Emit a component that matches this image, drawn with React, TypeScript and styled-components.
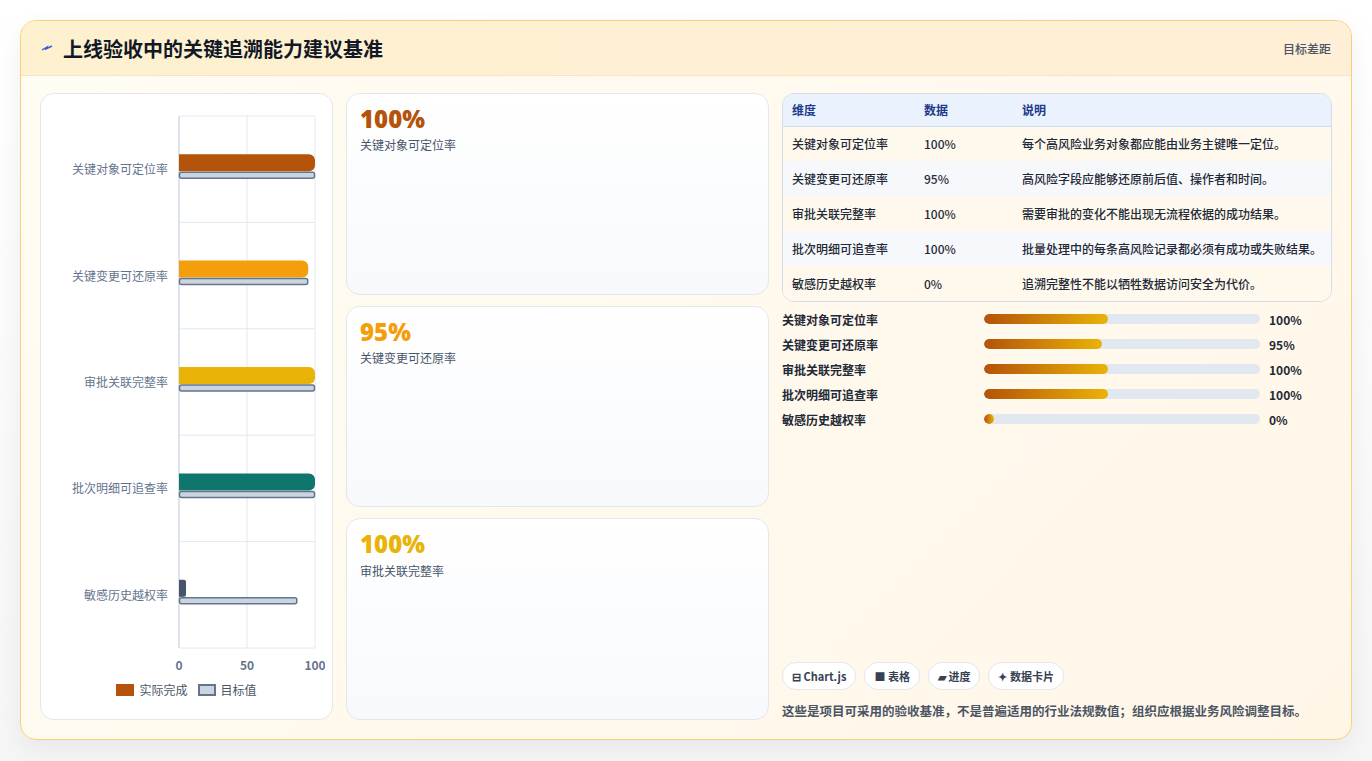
import React from 'react'
import styled, { createGlobalStyle } from 'styled-components'

// ── Data ──────────────────────────────────────────────────────────────────────

const METRICS = [
  { name: '关键对象可定位率', value: 100, target: 100, color: '#b45309', note: '每个高风险业务对象都应能由业务主键唯一定位。' },
  { name: '关键变更可还原率', value: 95, target: 95, color: '#f59e0b', note: '高风险字段应能够还原前后值、操作者和时间。' },
  { name: '审批关联完整率', value: 100, target: 100, color: '#eab308', note: '需要审批的变化不能出现无流程依据的成功结果。' },
  { name: '批次明细可追查率', value: 100, target: 100, color: '#0f766e', note: '批量处理中的每条高风险记录都必须有成功或失败结果。' },
  { name: '敏感历史越权率', value: 0, target: 87, color: '#475569', note: '追溯完整性不能以牺牲数据访问安全为代价。' },
]

const FONT = `"Noto Sans CJK SC", "Noto Sans", sans-serif`

// ── Styled ────────────────────────────────────────────────────────────────────

const Global = createGlobalStyle`
  html, body { margin: 0; background: #f3f4f6; font-family: ${FONT}; }
  * { box-sizing: border-box; }
`

const Page = styled.div`
  padding: 20px 20px 21px 20px;
  width: 1372px;
  height: 761px;
  background: linear-gradient(180deg, #fff 0%, #f5f5f5 100%);
`

const Panel = styled.div`
  height: 720px;
  border: 1px solid #f3d27a;
  border-radius: 16px;
  background: linear-gradient(135deg, #fffcf3 0%, #fff6e8 100%);
  overflow: hidden;
  display: flex;
  flex-direction: column;
  box-shadow: 0 8px 24px rgba(0, 0, 0, 0.06);
`

const Header = styled.div`
  height: 55px;
  flex-shrink: 0;
  display: flex;
  align-items: center;
  justify-content: space-between;
  padding: 0 20px 0 20px;
  background: linear-gradient(90deg, #fdf1cf 0%, #feefd6 100%);
  border-bottom: 1px solid #f4e6c4;
`

const Title = styled.h1`
  margin: 0;
  font-size: 20px;
  font-weight: 700;
  color: #111827;
  display: flex;
  align-items: center;
  gap: 10px;
`

const HeaderMeta = styled.span`
  font-size: 12px;
  color: #4b5563;
  font-weight: 500;
`

const Body = styled.div`
  flex: 1;
  display: grid;
  grid-template-columns: 293px 423px 1fr;
  gap: 13px;
  padding: 17px 19px 19px 19px;
  min-height: 0;
`

const Card = styled.div`
  background: #fff;
  border: 1px solid #e5e7eb;
  border-radius: 14px;
`

const ChartCard = styled(Card)`
  padding: 10px 8px 10px 8px;
  display: flex;
  flex-direction: column;
  align-items: center;
`

const Legend = styled.div`
  display: flex;
  gap: 10px;
  align-items: center;
  font-size: 12px;
  color: #4b5563;
  margin-top: 2px;
`

const LegendItem = styled.span`
  display: flex;
  align-items: center;
  gap: 5px;
`

const Swatch = styled.span<{ $fill: string; $border?: string }>`
  width: 18px;
  height: 12px;
  background: ${(p) => p.$fill};
  border: ${(p) => (p.$border ? `2px solid ${p.$border}` : 'none')};
`

const StatColumn = styled.div`
  display: grid;
  grid-template-rows: repeat(3, 1fr);
  gap: 11px;
`

const StatCard = styled(Card)`
  background: linear-gradient(180deg, #ffffff 0%, #f7f9fc 100%);
  padding: 12px 13px;
`

const StatValue = styled.div<{ $color: string }>`
  font-size: 24px;
  font-weight: 800;
  color: ${(p) => p.$color};
  line-height: 1.1;
  font-family: "Open Sans", ${FONT};
`

const StatLabel = styled.div`
  font-size: 12px;
  color: #475569;
  margin-top: 4px;
`

const RightColumn = styled.div`
  display: flex;
  flex-direction: column;
  min-width: 0;
`

const TableWrap = styled.div`
  border: 1px solid #d5dce6;
  border-radius: 12px;
  overflow: hidden;
`

const Table = styled.table`
  width: 100%;
  border-collapse: collapse;
  font-size: 12px;
`

const Th = styled.th`
  text-align: left;
  font-weight: 700;
  color: #1e3a8a;
  background: #eaf2fd;
  height: 32px;
  padding: 0 9px;
  border-bottom: 1px solid #cfdbea;
`

const Tr = styled.tr<{ $alt: boolean }>`
  background: ${(p) => (p.$alt ? '#f6f8fb' : '#fef9ec')};
  & + & td { border-top: 1px solid #e6eaf0; }
`

const Td = styled.td`
  height: 35px;
  padding: 0 9px;
  color: #1f2937;
  font-weight: 500;
  white-space: nowrap;
`

const Bars = styled.div`
  margin-top: 8px;
  display: flex;
  flex-direction: column;
  gap: 7px;
`

const BarRow = styled.div`
  display: grid;
  grid-template-columns: 202px 276px 1fr;
  align-items: center;
  gap: 0;
  height: 18px;
  font-size: 12px;
  font-weight: 700;
  color: #1f2937;
`

const Track = styled.div`
  height: 10px;
  border-radius: 5px;
  background: #e2e8f0;
  overflow: hidden;
`

const Fill = styled.div`
  height: 100%;
  min-width: 10px;
  border-radius: 5px;
  background: linear-gradient(90deg, #b45309 0%, #eab308 100%);
`

const BarValue = styled.span`
  padding-left: 9px;
`

const Spacer = styled.div`
  flex: 1;
`

const Chips = styled.div`
  display: flex;
  gap: 8px;
`

const Chip = styled.span`
  height: 28px;
  padding: 0 9px;
  display: inline-flex;
  align-items: center;
  gap: 4px;
  border-radius: 14px;
  background: #fff;
  border: 1px solid #e5e7eb;
  font-size: 11px;
  font-weight: 700;
  color: #374151;
`

const Footnote = styled.p`
  margin: 11px 0 0;
  font-size: 12.5px;
  font-weight: 600;
  color: #4b5563;
  white-space: nowrap;
`

// ── Chart ─────────────────────────────────────────────────────────────────────

function BarChart() {
  const x0 = 130
  const w = 136
  const top = 12
  const band = 106.4
  const sx = (v: number) => x0 + (v / 100) * w
  return (
    <svg width="276" height="575" style={{ fontFamily: FONT }}>
      {[0, 50, 100].map((v) => (
        <line key={v} x1={sx(v)} x2={sx(v)} y1={top} y2={top + band * 5} stroke="#e2e8f0" />
      ))}
      {[0, 1, 2, 3, 4, 5].map((i) => (
        <line key={i} x1={x0} x2={x0 + w} y1={top + band * i} y2={top + band * i} stroke="#e2e8f0" />
      ))}
      <line x1={x0} x2={x0} y1={top} y2={top + band * 5} stroke="#cbd5e1" />
      {METRICS.map((m, i) => {
        const cy = top + band * i + band / 2
        return (
          <g key={m.name}>
            <text x={x0 - 11} y={cy + 5} textAnchor="end" fontSize="12" fill="#64748b">{m.name}</text>
            <path
              d={`M${x0} ${cy - 15} H${Math.max(sx(m.value) - 6, x0 + 1)} a6 6 0 0 1 6 6 v5 a6 6 0 0 1 -6 6 H${x0} Z`}
              fill={m.color}
            />
            {m.value === 0 && <rect x={x0} y={cy - 15} width={7} height={17} rx={2} fill={m.color} />}
            <rect x={x0 + 0.5} y={cy + 3} width={sx(m.target) - x0 - 1} height={6} rx={2} fill="#cbd5e1" stroke="#64748b" strokeWidth="1.5" />
          </g>
        )
      })}
      {[0, 50, 100].map((v) => (
        <text key={v} x={sx(v)} y={top + band * 5 + 22} textAnchor="middle" fontSize="12" fontWeight="600" fill="#64748b">{v}</text>
      ))}
    </svg>
  )
}

// ── App ───────────────────────────────────────────────────────────────────────

export default function App() {
  return (
    <Page>
      <Global />
      <Panel>
        <Header>
          <Title>
            <svg width="12" height="10" viewBox="0 0 12 10">
              <path d="M1 7 L6 4 L5 6 L11 3" stroke="#3b5bdb" strokeWidth="1.4" fill="none" />
            </svg>
            上线验收中的关键追溯能力建议基准
          </Title>
          <HeaderMeta>目标差距</HeaderMeta>
        </Header>
        <Body>
          <ChartCard>
            <BarChart />
            <Legend>
              <LegendItem><Swatch $fill="#b45309" />实际完成</LegendItem>
              <LegendItem><Swatch $fill="#cbd5e1" $border="#64748b" />目标值</LegendItem>
            </Legend>
          </ChartCard>

          <StatColumn>
            {METRICS.slice(0, 3).map((m) => (
              <StatCard key={m.name}>
                <StatValue $color={m.color}>{m.value}%</StatValue>
                <StatLabel>{m.name}</StatLabel>
              </StatCard>
            ))}
          </StatColumn>

          <RightColumn>
            <TableWrap>
              <Table>
                <colgroup>
                  <col style={{ width: 132 }} />
                  <col style={{ width: 98 }} />
                  <col />
                </colgroup>
                <thead>
                  <tr><Th>维度</Th><Th>数据</Th><Th>说明</Th></tr>
                </thead>
                <tbody>
                  {METRICS.map((m, i) => (
                    <Tr key={m.name} $alt={i % 2 === 1}>
                      <Td>{m.name}</Td>
                      <Td>{m.value}%</Td>
                      <Td>{m.note}</Td>
                    </Tr>
                  ))}
                </tbody>
              </Table>
            </TableWrap>

            <Bars>
              {METRICS.map((m) => (
                <BarRow key={m.name}>
                  <span>{m.name}</span>
                  <Track><Fill style={{ width: `${m.value * 0.45}%` }} /></Track>
                  <BarValue>{m.value}%</BarValue>
                </BarRow>
              ))}
            </Bars>

            <Spacer />
            <Chips>
              <Chip>⊟ Chart.js</Chip>
              <Chip>■ 表格</Chip>
              <Chip>▰ 进度</Chip>
              <Chip>✦ 数据卡片</Chip>
            </Chips>
            <Footnote>这些是项目可采用的验收基准，不是普遍适用的行业法规数值；组织应根据业务风险调整目标。</Footnote>
          </RightColumn>
        </Body>
      </Panel>
    </Page>
  )
}
